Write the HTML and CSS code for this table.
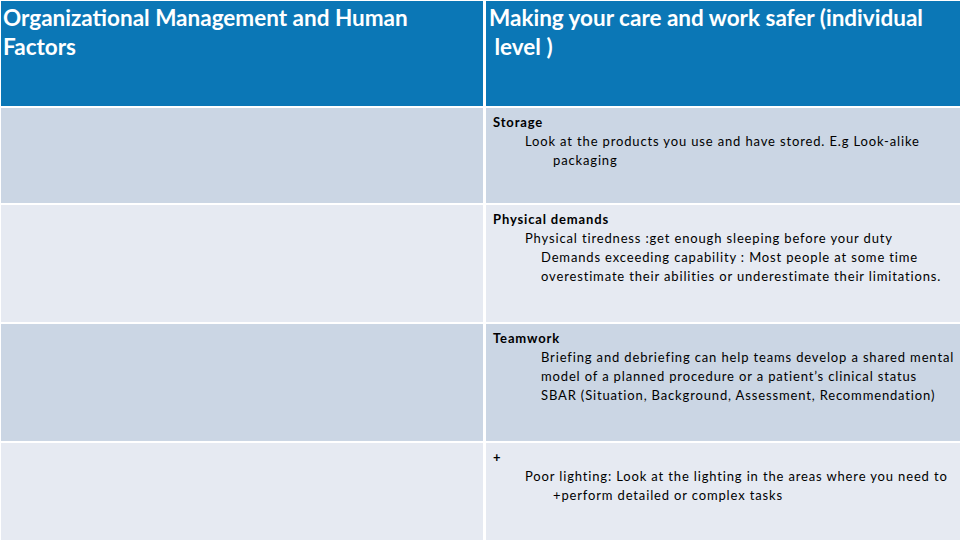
FILE: index.html
```html
<!DOCTYPE html>
<html>
<head>
<meta charset="utf-8">
<link rel="stylesheet" href="styles.css">
</head>
<body>
<div class="table">
  <div class="cell head">
    <div class="hline">Organizational Management and Human</div>
    <div class="hline">Factors</div>
  </div>
  <div class="cell head right">
    <div class="hline">Making your care and work safer (individual</div>
    <div class="hline">&nbsp;level )</div>
  </div>

  <div class="cell odd"></div>
  <div class="cell odd right">
    <div class="line l1 b">Storage</div>
    <div class="line l2">Look at the products you use and have stored. E.g Look-alike</div>
    <div class="line l4">packaging</div>
  </div>

  <div class="cell even"></div>
  <div class="cell even right">
    <div class="line l1 b">Physical demands</div>
    <div class="line l2">Physical tiredness :get enough sleeping before your duty</div>
    <div class="line l3">Demands exceeding capability : Most people at some time</div>
    <div class="line l3">overestimate their abilities or underestimate their limitations.</div>
  </div>

  <div class="cell odd"></div>
  <div class="cell odd right">
    <div class="line l1 b">Teamwork</div>
    <div class="line l3">Briefing and debriefing can help teams develop a shared mental</div>
    <div class="line l3">model of a planned procedure or a patient’s clinical status</div>
    <div class="line l3">SBAR (Situation, Background, Assessment, Recommendation)</div>
  </div>

  <div class="cell even"></div>
  <div class="cell even right">
    <div class="line l1 b">+</div>
    <div class="line l2">Poor lighting: Look at the lighting in the areas where you need to</div>
    <div class="line l4">+perform detailed or complex tasks</div>
  </div>
</div>
</body>
</html>
```

FILE: styles.css
```css
html, body {
  margin: 0;
  padding: 0;
  background: #ffffff;
}
body {
  width: 960px;
  height: 540px;
  overflow: hidden;
  font-family: Lato, "Open Sans", sans-serif;
}
.table {
  display: grid;
  grid-template-columns: 482px 474px;
  grid-template-rows: 105px 95px 117px 117px 100px;
  column-gap: 3px;
  row-gap: 2px;
  padding: 1px 0 0 1px;
}
.cell {
  box-sizing: border-box;
  overflow: hidden;
}
.head {
  background: #0b77b6;
  color: #ffffff;
  font-weight: 700;
  font-size: 22.5px;
  padding: 2px 0 0 2px;
}
.head.right {
  padding-left: 3px;
}
.hline {
  line-height: 29px;
  white-space: nowrap;
}
.odd { background: #cbd6e4; }
.even { background: #e6eaf2; }
.right.odd, .right.even {
  padding: 5px 0 0 0;
  color: #000000;
  font-size: 13px;
  letter-spacing: 0.85px;
}
.line {
  line-height: 19px;
  white-space: nowrap;
}
.b { font-weight: 700; }
.l1 { padding-left: 7px; }
.l2 { padding-left: 39px; }
.l3 { padding-left: 55px; }
.l4 { padding-left: 67px; }
```
